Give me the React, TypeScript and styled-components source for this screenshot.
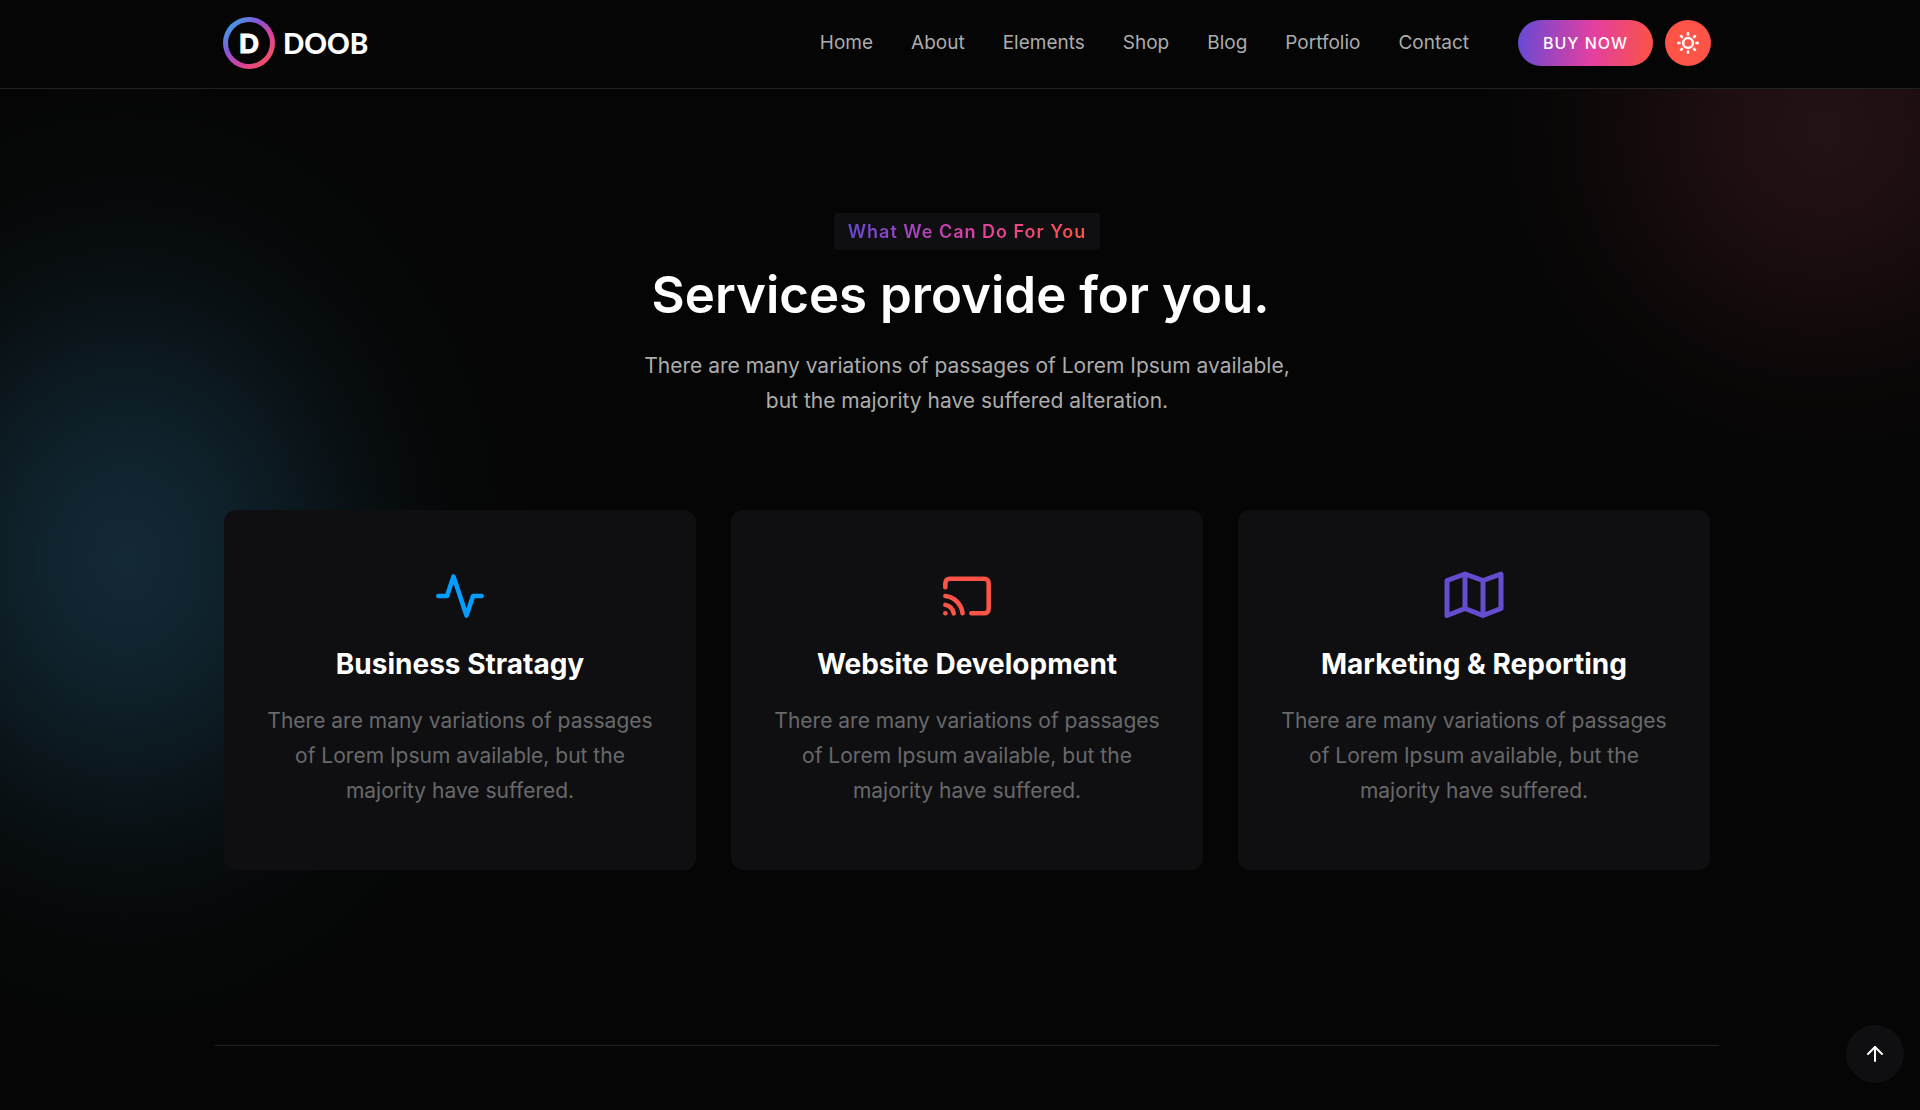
import React from "react";
import styled, { createGlobalStyle } from "styled-components";
import { ArrowUp } from "lucide-react";

const color = {
  page: "#050505",
  panel: "#0f0f11",
  line: "#222223",
  heading: "#ffffff",
  body: "#acacac",
  muted: "#68696b",
  blue: "#059dff",
  coral: "#fe5447",
  violet: "#664ccf",
};

const brandGradient = "linear-gradient(95deg, #6549d5 0%, #e33fa1 55%, #fb5343 100%)";

const GlobalStyle = createGlobalStyle`
  *, *::before, *::after { box-sizing: border-box; }
  body {
    margin: 0;
    background: ${color.page};
    color: ${color.body};
    font-family: Inter, "Liberation Sans", sans-serif;
    -webkit-font-smoothing: antialiased;
  }
  h1, h2, p, ul { margin: 0; padding: 0; }
`;

const Page = styled.div`
  min-height: 100vh;
  display: flex;
  flex-direction: column;
  overflow: hidden;
`;

const Container = styled.div`
  width: 100%;
  max-width: 1504px;
  margin: 0 auto;
`;

const Header = styled.header`
  background: ${color.page};
  border-bottom: 1px solid ${color.line};
  padding-left: 14px;
`;

const HeaderRow = styled(Container)`
  display: flex;
  align-items: center;
  justify-content: space-between;
  height: 88px;
  padding: 0 8px 2px;
`;

const Logo = styled.a`
  display: flex;
  align-items: center;
  gap: 8px;
  color: ${color.heading};
  text-decoration: none;
  font: 900 28px/32px Lato, Inter, sans-serif;
`;

const Ring = styled.span`
  display: grid;
  place-items: center;
  width: 52px;
  height: 52px;
  border: 5px solid transparent;
  border-radius: 50%;
  background:
    linear-gradient(${color.page}, ${color.page}) padding-box,
    linear-gradient(135deg, #3ba3ea 12%, #8a52d6 38%, #d8429f 62%, #f5505a 88%) border-box;
  font-size: 26px;
  -webkit-text-stroke: 1px ${color.heading};
`;

const HeaderEnd = styled.div`
  display: flex;
  align-items: center;
  gap: 49px;
`;

const NavList = styled.ul`
  display: flex;
  gap: 38px;
  list-style: none;
`;

const NavLink = styled.a`
  display: block;
  color: ${color.body};
  font-size: 19px;
  line-height: 28px;
  text-decoration: none;
`;

const Actions = styled.div`
  display: flex;
  gap: 12px;
`;

const BuyButton = styled.button`
  height: 46px;
  padding: 0 25px;
  border: 0;
  border-radius: 23px;
  background: ${brandGradient};
  color: ${color.heading};
  font: 500 16px/24px Inter, sans-serif;
  letter-spacing: 1px;
`;

const RoundButton = styled.button<{ $size: number; $fill: string }>`
  display: grid;
  place-items: center;
  width: ${(p) => p.$size}px;
  height: ${(p) => p.$size}px;
  padding: 0;
  border: 0;
  border-radius: 50%;
  background: ${(p) => p.$fill};
  color: ${color.heading};
`;

const BackToTop = styled(RoundButton)`
  position: fixed;
  right: 16px;
  bottom: 27px;
`;

const Main = styled.main`
  flex: 1;
  padding: 124px 0 64px 14px;
  background:
    radial-gradient(ellipse 410px 490px at 126px 470px,
      rgba(19, 41, 52, 1) 0%, rgba(17, 39, 51, 0.9) 20%, rgba(16, 37, 47, 0.64) 40%,
      rgba(14, 32, 40, 0.34) 60%, rgba(12, 26, 28, 0.12) 80%, transparent 100%),
    radial-gradient(circle 360px at calc(100% - 96px) 40px,
      rgba(36, 18, 20, 1) 0%, rgba(34, 16, 19, 0.85) 28%, rgba(30, 14, 16, 0.48) 56%,
      rgba(26, 12, 12, 0.16) 80%, transparent 100%);
`;

const Intro = styled.div`
  display: flex;
  flex-direction: column;
  align-items: center;
  text-align: center;
`;

const Badge = styled.span`
  padding: 7px 14px 6px;
  border-radius: 4px;
  background: ${color.panel};
  font-size: 18px;
  font-weight: 600;
  line-height: 24px;
  letter-spacing: 1px;
`;

const GradientText = styled.span`
  background: ${brandGradient};
  background-clip: text;
  -webkit-background-clip: text;
  color: transparent;
`;

const Title = styled.h1`
  margin-top: 14px;
  color: ${color.heading};
  font-size: 51px;
  font-weight: 600;
  line-height: 62px;
`;

const Lead = styled.p`
  margin-top: 22px;
  font-size: 21px;
  line-height: 35px;
`;

const Cards = styled(Container)`
  display: grid;
  grid-template-columns: repeat(3, 1fr);
  gap: 35px;
  margin-top: 92px;
  padding: 0 9px;
`;

const Card = styled.article`
  display: flex;
  flex-direction: column;
  align-items: center;
  padding: 60px 35px 62px;
  border-radius: 12px;
  background: ${color.panel};
  text-align: center;
`;

const CardIcon = styled.svg<{ $tone: string }>`
  height: 52px;
  fill: none;
  stroke: ${(p) => p.$tone};
  stroke-linecap: round;
  stroke-linejoin: round;
`;

const CardTitle = styled.h2`
  margin-top: 24px;
  color: ${color.heading};
  font-size: 28px;
  font-weight: 700;
  line-height: 36px;
`;

const CardText = styled.p`
  margin-top: 21px;
  color: ${color.muted};
  font-size: 21px;
  line-height: 35px;
`;

const Divider = styled(Container)`
  margin-top: 175px;
  border-top: 1px solid ${color.line};
`;

const navItems = ["Home", "About", "Elements", "Shop", "Blog", "Portfolio", "Contact"];

const services = [
  {
    title: "Business Stratagy",
    icon: (
      <CardIcon $tone={color.blue} viewBox="0 0 24 24" strokeWidth="2.1" aria-hidden="true">
        <polyline points="22 12 18 12 15 21 9 3 6 12 2 12" />
      </CardIcon>
    ),
  },
  {
    title: "Website Development",
    icon: (
      <CardIcon $tone={color.coral} viewBox="0 0 24 24" strokeWidth="2.1" aria-hidden="true">
        <path d="M2 16.1A5 5 0 0 1 5.9 20M2 12.05A9 9 0 0 1 9.95 20M2 8V6a2 2 0 0 1 2-2h16a2 2 0 0 1 2 2v12a2 2 0 0 1-2 2h-6" />
        <line x1="2" y1="20" x2="2.01" y2="20" />
      </CardIcon>
    ),
  },
  {
    title: "Marketing & Reporting",
    icon: (
      <CardIcon $tone={color.violet} viewBox="0 0 60 52" strokeWidth="5" aria-hidden="true">
        <path d="M3 10.5L21 4l18 6.5L57 4v34.5l-18 7-18-7-18 7zM21 4v34.5M39 10.5v35" />
      </CardIcon>
    ),
  },
];

function SunIcon() {
  return (
    <svg width="24" height="24" viewBox="-12 -12 24 24" fill="none" stroke="currentColor" strokeWidth="2.5" aria-hidden="true">
      <circle r="4.9" />
      {[0, 45, 90, 135, 180, 225, 270, 315].map((angle) => (
        <path key={angle} d="M0 -10.8V-7.4" transform={`rotate(${angle})`} />
      ))}
    </svg>
  );
}

export default function App() {
  return (
    <Page>
      <GlobalStyle />
      <Header>
        <HeaderRow>
          <Logo href="#">
            <Ring>D</Ring>
            <span>DOOB</span>
          </Logo>
          <HeaderEnd>
            <nav aria-label="Main">
              <NavList>
                {navItems.map((item) => (
                  <li key={item}>
                    <NavLink href="#">{item}</NavLink>
                  </li>
                ))}
              </NavList>
            </nav>
            <Actions>
              <BuyButton type="button">BUY NOW</BuyButton>
              <RoundButton type="button" $size={46} $fill={color.coral} aria-label="Switch theme">
                <SunIcon />
              </RoundButton>
            </Actions>
          </HeaderEnd>
        </HeaderRow>
      </Header>
      <Main>
        <Intro>
          <Badge>
            <GradientText>What We Can Do For You</GradientText>
          </Badge>
          <Title>Services provide for you.&nbsp;</Title>
          <Lead>
            There are many variations of passages of Lorem Ipsum available,
            <br />
            but the majority have suffered alteration.
          </Lead>
        </Intro>
        <Cards>
          {services.map((service) => (
            <Card key={service.title}>
              {service.icon}
              <CardTitle>{service.title}</CardTitle>
              <CardText>
                There are many variations of passages of Lorem Ipsum available, but the majority have suffered.
              </CardText>
            </Card>
          ))}
        </Cards>
        <Divider />
      </Main>
      <BackToTop type="button" $size={58} $fill={color.panel} aria-label="Back to top">
        <ArrowUp size={24} strokeWidth={2} />
      </BackToTop>
    </Page>
  );
}
